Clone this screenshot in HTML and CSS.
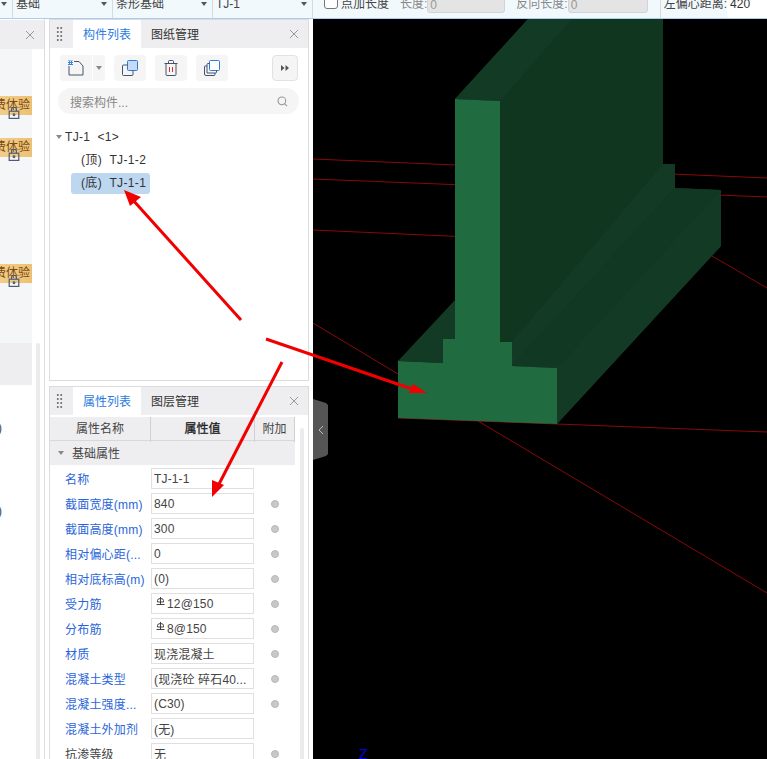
FILE: index.html
```html
<!DOCTYPE html>
<html lang="zh">
<head>
<meta charset="utf-8">
<title>构件属性</title>
<link rel="stylesheet" href="styles.css">
</head>
<body>
<div class="page">
  <header class="topbar">
    <div class="bar">
      <div class="sel s1"><i class="caret"></i></div>
      <div class="sel s2"><span>基础</span><i class="caret"></i></div>
      <div class="sel s2"><span>条形基础</span><i class="caret"></i></div>
      <div class="sel s2"><span>TJ-1</span><i class="caret"></i></div>
      <i class="box"></i><span class="chk">点加长度</span>
      <span class="muted lab1">长度:</span><span class="dis d1">0</span>
      <span class="muted lab2">反向长度:</span><span class="dis d2">0</span>
      <i class="vsep"></i>
      <span class="off">左偏心距离:</span><span class="offv">420</span>
    </div>
  </header>
  <main class="main">
    <aside class="leftp">
      <div class="phead"><svg class="x" viewBox="0 0 10 10"><path d="M1 1l8 8M9 1l-8 8"/></svg></div>
      <div class="lrow">
        <div class="lcol">
          <div class="lbody">
            <div class="vip v1">费体验<svg class="lock" viewBox="0 0 10 10"><path d="M3 3.500V2a2 2 0 0 1 4 0v1.500"/><rect x="1" y="3.500" width="8" height="6"/><circle cx="5" cy="6.500" r=".7"/></svg></div>
            <div class="vip v2">费体验<svg class="lock" viewBox="0 0 10 10"><path d="M3 3.500V2a2 2 0 0 1 4 0v1.500"/><rect x="1" y="3.500" width="8" height="6"/><circle cx="5" cy="6.500" r=".7"/></svg></div>
            <div class="vip v3">费体验<svg class="lock" viewBox="0 0 10 10"><path d="M3 3.500V2a2 2 0 0 1 4 0v1.500"/><rect x="1" y="3.500" width="8" height="6"/><circle cx="5" cy="6.500" r=".7"/></svg></div>
          </div>
          <div class="gray"></div>
          <div class="paren p1">)</div>
          <div class="paren p2">)</div>
        </div>
        <div class="lscroll"></div>
      </div>
    </aside>

    <div class="mid">
      <section class="panel list">
        <div class="tabs">
          <span class="grip"></span>
          <span class="tab on">构件列表</span><span class="tab">图纸管理</span>
          <svg class="x" viewBox="0 0 10 10"><path d="M1 1l8 8M9 1l-8 8"/></svg>
        </div>
        <div class="tools">
          <div class="tbtn new">
            <svg viewBox="0 0 16 16" width="16" height="16"><path class="ln" d="M1 6v9h14V6l-4-4.500H6"/><rect x="0" y="0.500" width="5" height="4.500" fill="#3b82e0"/><path d="M0 1.500h5M0 3.500h5" stroke="#fff" stroke-dasharray="1 1" fill="none"/></svg>
          </div>
          <div class="tbtn drop"><i class="caret g"></i></div>
          <div class="tbtn t2">
            <svg viewBox="0 0 16 16" width="16" height="16"><rect x="5.500" y="0.500" width="10" height="10" rx="1" fill="#c5daf5" stroke="#2f7ae0"/><path class="ln" d="M5.500 5H1.500a1 1 0 0 0-1 1v8.500a1 1 0 0 0 1 1H10a1 1 0 0 0 1-1V10.500"/></svg>
          </div>
          <div class="tbtn t3">
            <svg viewBox="0 0 14 16" width="14" height="16"><path class="ln" d="M2 4v10.500a1 1 0 0 0 1 1h8a1 1 0 0 0 1-1V4M0.500 3.500h13M4.500 3.500V1.500a1 1 0 0 1 1-1h3a1 1 0 0 1 1 1v2"/><path d="M5.500 7v5M8.500 7v5" stroke="#d9342b" fill="none"/></svg>
          </div>
          <div class="tbtn t4">
            <svg viewBox="0 0 16 16" width="16" height="16"><rect x="5.500" y="0.500" width="10" height="10" rx="1" fill="#fff" stroke="#2f7ae0"/><path class="ln" d="M5.500 3.500H4a1 1 0 0 0-1 1v8.500h8.500a1 1 0 0 0 1-1v-1.500M3 6H1a.5.5 0 0 0-.5.5V14a1.500 1.500 0 0 0 1.500 1.500h8a1 1 0 0 0 1-1V13"/></svg>
          </div>
          <div class="more"><svg viewBox="0 0 8 6" width="8" height="6"><path d="M0 0l3.500 3L0 6zM4.500 0L8 3 4.500 6z" fill="#555"/></svg></div>
        </div>
        <div class="search">
          <span>搜索构件...</span>
          <svg viewBox="0 0 12 12" width="11" height="11"><circle cx="5.300" cy="5.300" r="4.200"/><path d="M8.500 8.500L11 11"/></svg>
        </div>
        <div class="tree">
          <div class="root"><i class="caret g"></i>TJ-1&nbsp; &lt;1&gt;</div>
          <div class="node">(顶)&nbsp; TJ-1-2</div>
          <div class="node cur">(底)&nbsp; TJ-1-1</div>
        </div>
      </section>

      <section class="panel props">
        <div class="tabs">
          <span class="grip"></span>
          <span class="tab on">属性列表</span><span class="tab">图层管理</span>
          <svg class="x" viewBox="0 0 10 10"><path d="M1 1l8 8M9 1l-8 8"/></svg>
        </div>
        <div class="pwrap">
          <div class="tbody">
            <div class="thead"><span class="c1">属性名称</span><span class="c2">属性值</span><span class="c3">附加</span></div>
            <div class="group"><i class="caret g"></i>基础属性</div>
            <div class="row"><span class="n">名称</span><span class="v">TJ-1-1</span></div>
            <div class="row"><span class="n">截面宽度(mm)</span><span class="v">840</span><i class="dot"></i></div>
            <div class="row"><span class="n">截面高度(mm)</span><span class="v">300</span><i class="dot"></i></div>
            <div class="row"><span class="n">相对偏心距(...</span><span class="v">0</span><i class="dot"></i></div>
            <div class="row"><span class="n">相对底标高(m)</span><span class="v">(0)</span><i class="dot"></i></div>
            <div class="row"><span class="n">受力筋</span><span class="v"><svg class="rb" viewBox="0 0 9 9"><path d="M4.500 0v8M1.500 5V3.500a3 2 0 0 1 6 0V5zM0.500 7.500h8"/></svg>12@150</span><i class="dot"></i></div>
            <div class="row"><span class="n">分布筋</span><span class="v"><svg class="rb" viewBox="0 0 9 9"><path d="M4.500 0v8M1.500 5V3.500a3 2 0 0 1 6 0V5zM0.500 7.500h8"/></svg>8@150</span><i class="dot"></i></div>
            <div class="row"><span class="n">材质</span><span class="v">现浇混凝土</span><i class="dot"></i></div>
            <div class="row"><span class="n">混凝土类型</span><span class="v">(现浇砼 碎石40...</span><i class="dot"></i></div>
            <div class="row"><span class="n">混凝土强度...</span><span class="v">(C30)</span><i class="dot"></i></div>
            <div class="row"><span class="n">混凝土外加剂</span><span class="v">(无)</span></div>
            <div class="row"><span class="n k">抗渗等级</span><span class="v">无</span><i class="dot"></i></div>
          </div>
          <div class="pscroll"></div>
        </div>
      </section>
    </div>

    <div class="canvas">
      <svg class="scene" viewBox="313 19 454 740" width="454" height="740">
        <g class="red">
          <path d="M313 159L767 178M313 179L767 197M313 230L470 237M557 424L767 432M398 418L557 424M478 421L767 593M700 249L767 288M313 323L398 374"/>
        </g>
        <polygon class="dk" points="528,19 663,19 663,164 675,164 675,188 721,190 721,246 557,424 557,368 512,366 512,342 500,342 500,101 455,99"/>
        <polygon class="dk2" points="663,164 675,164 675,188 512,366 512,342"/>
        <polygon class="dk3" points="512,366 675,188 721,190 557,368"/>
        <polygon class="dk2" points="721,190 721,246 557,424 557,368"/>
        <polygon class="dk2" points="528,19 572,19 500,101 455,99"/>
        <polygon class="dk2" points="398,361 455,300 455,339 443,339 443,363"/>
        <polygon class="ft" points="455,99 500,101 500,342 512,342 512,366 557,368 557,424 398,418 398,361 443,363 443,339 455,339"/>
      </svg>
      <span class="axis">Z</span>
      <div class="handle"><svg viewBox="0 0 6 10" width="6" height="10"><path d="M5 1L1 5l4 4" fill="none" stroke="#bbb"/></svg></div>
    </div>
  </main>
  <svg class="arrows" viewBox="0 0 767 759" width="767" height="759">
    <g class="shaft">
      <path d="M241 320L132 199"/>
      <path d="M266 339L412 389"/>
      <path d="M282 362L218 486"/>
    </g>
    <g class="head">
      <polygon points="124,190 130,206 141,197"/>
      <polygon points="427,393 409,393 413,384"/>
      <polygon points="212,497 212,480 224,485"/>
    </g>
  </svg>
</div>
</body>
</html>
```
FILE: styles.css
```css
* { box-sizing: border-box; }
html, body { margin: 0; padding: 0; }
body { font-family: "Liberation Sans", "Noto Sans CJK SC", sans-serif; font-size: 12px; color: #333; background: #fff; }
i { display: block; }
.page { position: relative; width: 767px; height: 759px; overflow: hidden; }

.topbar { height: 19px; background: #f2f9fd; border-bottom: 1px solid #a9cdf2; overflow: hidden; }
.bar { display: flex; align-items: flex-start; height: 24px; margin-top: -6px; line-height: 20px; white-space: nowrap; color: #444; }
.sel { position: relative; flex: none; height: 24px; border-right: 1px solid #d6dbe0; padding-left: 3px; }
.s1 { width: 13px; }
.s2 { width: 100px; }
.sel .caret { position: absolute; right: 5px; top: 8px; }
.caret { width: 0; height: 0; border-left: 3px solid transparent; border-right: 3px solid transparent; border-top: 4px solid #555; }
.caret.g { border-top-color: #888; }
.box { width: 14px; height: 15px; margin: 0 3px 0 11px; background: #fff; border: 1px solid #777; border-radius: 3px; flex: none; }
.muted { color: #888; }
.lab1 { margin-left: 11px; }
.lab2 { margin-left: 11px; }
.dis { height: 19px; padding-left: 2px; background: #e4e4e4; border: 1px solid #cfd4d9; border-radius: 3px; color: #999; }
.d1 { width: 78px; }
.d2 { width: 80px; }
.vsep { width: 1px; height: 24px; margin-left: 12px; background: #d6dbe0; }
.off { margin-left: 3px; }
.offv { flex: 1; height: 24px; padding-left: 3px; background: #fff; border-radius: 3px 0 0 3px; color: #333; }

.main { display: flex; height: 740px; }

.x { width: 10px; height: 10px; fill: none; stroke: #999; stroke-width: 1; flex: none; margin-left: auto; margin-right: 9px; }
.leftp { flex: none; width: 45px; margin-right: 4px; border-right: 1px solid #ddd; display: flex; flex-direction: column; }
.phead { height: 29px; flex: none; margin-top: 1px; background: #eeeef0; display: flex; align-items: center; }
.lrow { display: flex; flex: 1; }
.lcol { width: 32px; flex: none; overflow: hidden; }
.lbody { height: 294px; background: #f5f6f8; padding-top: 47px; }
.vip { position: relative; height: 19px; width: 32px; white-space: nowrap; padding-right: 2px; line-height: 19px; color: #7b4a12; background: linear-gradient(90deg, #f2cd88, #ecc173); display: flex; justify-content: flex-end; }
.v2 { margin-top: 23px; }
.v3 { margin-top: 107px; }
.lock { position: absolute; left: 8px; top: 11px; width: 12px; height: 12px; fill: none; stroke: #4a5a78; stroke-width: 1; }
.gray { height: 42px; background: #eeeef0; }
.paren { line-height: 14px; margin-left: -2px; color: #444; }
.p1 { margin-top: 36px; }
.p2 { margin-top: 69px; }
.lscroll { width: 4px; margin: 294px 0 0 4px; background: #ebebeb; border-radius: 2px 2px 0 0; }

.mid { flex: none; width: 264px; padding-right: 4px; display: flex; flex-direction: column; }
.panel { border: 1px solid #dcdcdc; background: #fff; }
.list { height: 362px; flex: none; }
.props { flex: 1; margin-top: 5px; border-bottom: 0; display: flex; flex-direction: column; overflow: hidden; }
.tabs { display: flex; align-items: center; height: 28px; flex: none; background: #eeeef0; }
.grip { width: 7px; height: 16px; margin: 0 10px 0 6px; flex: none; background: radial-gradient(circle, #777 1px, transparent 1.300px) 0 0 / 3.500px 4px; }
.tab { height: 28px; line-height: 30px; padding: 0 10px; }
.tab.on { background: #fff; color: #2a7be0; }

.tools { display: flex; padding: 7px 10px 0 10px; height: 40px; }
.tbtn { width: 32px; height: 26px; background: #f5f5f5; border-radius: 4px; display: flex; align-items: center; justify-content: center; flex: none; }
.tbtn svg, .search svg { fill: none; }
.ln { fill: none; stroke: #47536b; stroke-width: 1; }
.new { border-radius: 4px 0 0 4px; }
.drop { width: 12px; margin-left: 1px; border-radius: 0 4px 4px 0; }
.t2, .t3, .t4 { margin-left: 9px; }
.more { width: 26px; height: 26px; margin-left: auto; background: #f5f5f5; border: 1px solid #e2e2e2; border-radius: 4px; display: flex; align-items: center; justify-content: center; }
.search { display: flex; align-items: center; justify-content: space-between; height: 26px; margin: 0 9px 0 8px; padding: 0 11px 0 12px; background: #f5f5f5; border-radius: 13px; color: #888; }
.search svg { stroke: #999; stroke-width: 1.200; }
.tree { padding-top: 13px; }
.root { display: flex; align-items: center; height: 20px; padding-left: 6px; color: #333; letter-spacing: .3px; }
.root .caret { margin-right: 3px; }
.node { height: 21px; line-height: 21px; margin: 3px 0 0 21px; padding-left: 10px; width: 79px; border-radius: 3px; white-space: nowrap; letter-spacing: .35px; }
.cur { margin-top: 2px; background: #bdd7f0; }

.pwrap { display: flex; flex: 1; padding-top: 2px; }
.tbody { width: 245px; flex: none; }
.thead { display: grid; grid-template-columns: 101px 104px 40px; height: 24px; line-height: 25px; background: #eeeef0; text-align: center; border-bottom: 1px solid #d8d8d8; color: #444; }
.thead span { border-right: 1px solid #d0d0d0; }
.c2 { color: #222; -webkit-text-stroke: .3px #222; }
.group { display: flex; align-items: center; height: 24px; background: #eeeef0; padding: 0 0 1px 8px; margin-bottom: 1px; color: #444; }
.group .caret { margin-right: 8px; }
.row { display: grid; grid-template-columns: 101px 103px 41px; align-items: center; height: 25px; }
.n { padding-left: 15px; color: #2a66d9; white-space: nowrap; overflow: hidden; letter-spacing: .2px; }
.n.k { color: #444; }
.v { display: flex; align-items: center; height: 21px; padding-left: 2px; border: 1px solid #e0e0e0; white-space: nowrap; overflow: hidden; color: #444; letter-spacing: .15px; }
.rb { width: 9px; height: 9px; margin: -5px 2px 0 2px; fill: none; stroke: #333; stroke-width: .9; flex: none; }
.dot { width: 8px; height: 8px; justify-self: center; border-radius: 50%; background: #c8c8c8; border: 1px solid #b8b8b8; }
.pscroll { width: 4px; margin: 11px 0 0 5px; background: #ebebeb; border-radius: 2px 2px 0 0; flex: none; }

.canvas { position: relative; flex: 1; background: #000; overflow: hidden; }
.scene { display: block; }
.red { stroke: #8a0808; stroke-width: 1; fill: none; }
.dk { fill: #103620; }
.dk2 { fill: #123a24; }
.dk3 { fill: #113823; }
.ft { fill: #206b40; }
.axis { position: absolute; left: 46px; top: 727px; color: #0000ee; font-size: 14px; line-height: 16px; }
.handle { position: absolute; left: 0; top: 380px; width: 16px; height: 61px; display: flex; align-items: center; justify-content: center; background: #555; clip-path: polygon(0 0, 13px 4px, 15px 6px, 15px 55px, 13px 57px, 0 61px); }

.arrows { position: absolute; left: 0; top: 0; pointer-events: none; }
.shaft { stroke: #f00000; stroke-width: 3; fill: none; }
.head { fill: #f00000; }
```
